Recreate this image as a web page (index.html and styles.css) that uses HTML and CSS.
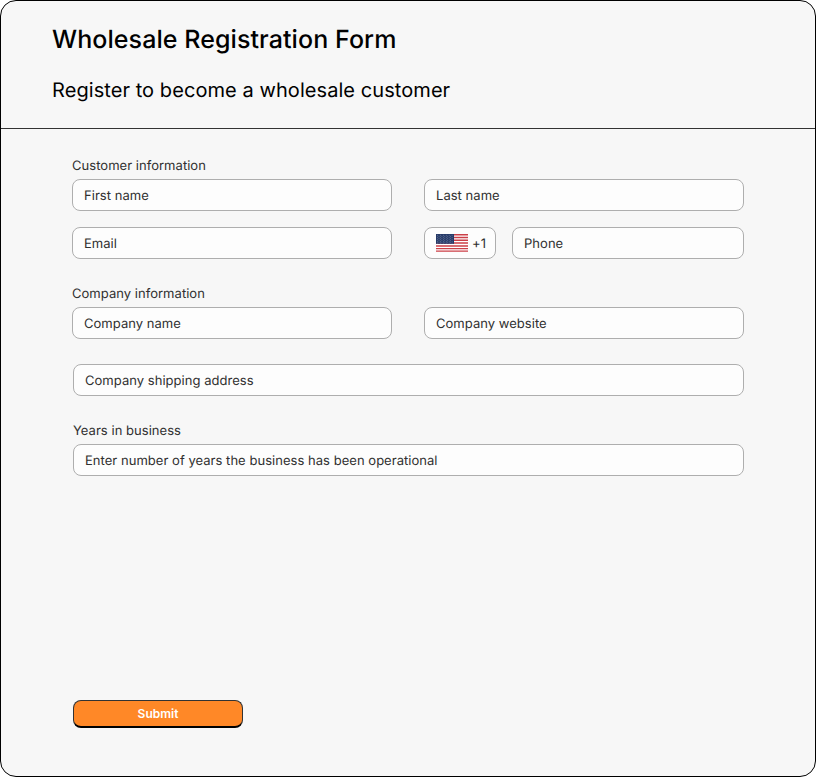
FILE: index.html
```html
<!DOCTYPE html>
<html lang="en">
<head>
<meta charset="utf-8">
<title>Wholesale Registration Form</title>
<link rel="stylesheet" href="styles.css">
</head>
<body>
<main class="card">
  <header class="header">
    <h1 class="title">Wholesale Registration Form</h1>
    <p class="subtitle">Register to become a wholesale customer</p>
  </header>
  <form class="form">
    <section class="group">
      <h2 class="label">Customer information</h2>
      <div class="row">
        <div class="field">First name</div>
        <div class="field">Last name</div>
      </div>
      <div class="row">
        <div class="field">Email</div>
        <div class="phone">
          <div class="field code">
            <svg class="flag" width="32" height="18" viewBox="0 0 32 18">
              <rect width="32" height="18" fill="#fff"/>
              <path d="M0 .7h32M0 3.46h32M0 6.23h32M0 9h32M0 11.9h32M0 14.6h32M0 17.1h32" stroke="#cb3f47" stroke-width="1.45"/>
              <rect width="18" height="9.8" fill="#263a68"/>
              <path d="M1.2 1.3h16M1.2 3.3h16M1.2 5.3h16M1.2 7.3h16M1.2 9h16" stroke="#8794b2" stroke-width=".7" stroke-dasharray=".8 2.1"/>
              <path d="M2.6 2.3h14M2.6 4.3h14M2.6 6.3h14M2.6 8.2h14" stroke="#8794b2" stroke-width=".7" stroke-dasharray=".8 2.1"/>
            </svg>
            <span>+1</span>
          </div>
          <div class="field">Phone</div>
        </div>
      </div>
    </section>
    <section class="group">
      <h2 class="label">Company information</h2>
      <div class="row">
        <div class="field">Company name</div>
        <div class="field">Company website</div>
      </div>
    </section>
    <div class="field wide">Company shipping address</div>
    <section class="years">
      <h2 class="label">Years in business</h2>
      <div class="field">Enter number of years the business has been operational</div>
    </section>
    <button class="submit" type="button">Submit</button>
  </form>
</main>
</body>
</html>
```
FILE: styles.css
```css
* { box-sizing: border-box; }
body { margin: 0; background: #fff; font-family: Inter, sans-serif; text-rendering: geometricPrecision; }
.card { width: 816px; height: 777px; background: #f7f7f7; border: 1px solid #000; border-radius: 16px; display: flex; flex-direction: column; overflow: hidden; }
.header { height: 128px; border-bottom: 1px solid #333; padding: 23px 51px 0; color: #000; }
.title { margin: 0; font-size: 25px; line-height: 32px; font-weight: 500; letter-spacing: .08px; }
.subtitle { margin: 20px 0 0; font-size: 20px; line-height: 28px; letter-spacing: .07px; }
.form { flex: 1; display: flex; flex-direction: column; padding: 29px 71px 48px; font-size: 13px; letter-spacing: .035px; color: #303030; }
.group { display: flex; flex-direction: column; margin-bottom: 27px; }
.label { margin: 0 0 5px; font-size: 13px; line-height: 16px; font-weight: 400; }
.row { display: grid; grid-template-columns: 320px 320px; gap: 32px; }
.row + .row { margin-top: 16px; }
.field { height: 32px; border: 1px solid #aeaeae; border-radius: 8px; background: #fdfdfd; padding: 2px 11px 0; display: flex; align-items: center; line-height: 20px; }
.phone { display: grid; grid-template-columns: 72px 232px; gap: 16px; }
.code { gap: 4px; }
.flag { flex: none; margin-top: -2px; }
.wide { margin: -2px 0 27px 1px; }
.years { margin-left: 1px; }
.submit { margin: auto 0 0 1px; width: 170px; height: 28px; border: 1px solid #333; border-bottom: 2px solid #000; border-radius: 8px; background: #ff8827; color: #fff; font: 600 12px/16px Inter, sans-serif; padding: 0; }
```
